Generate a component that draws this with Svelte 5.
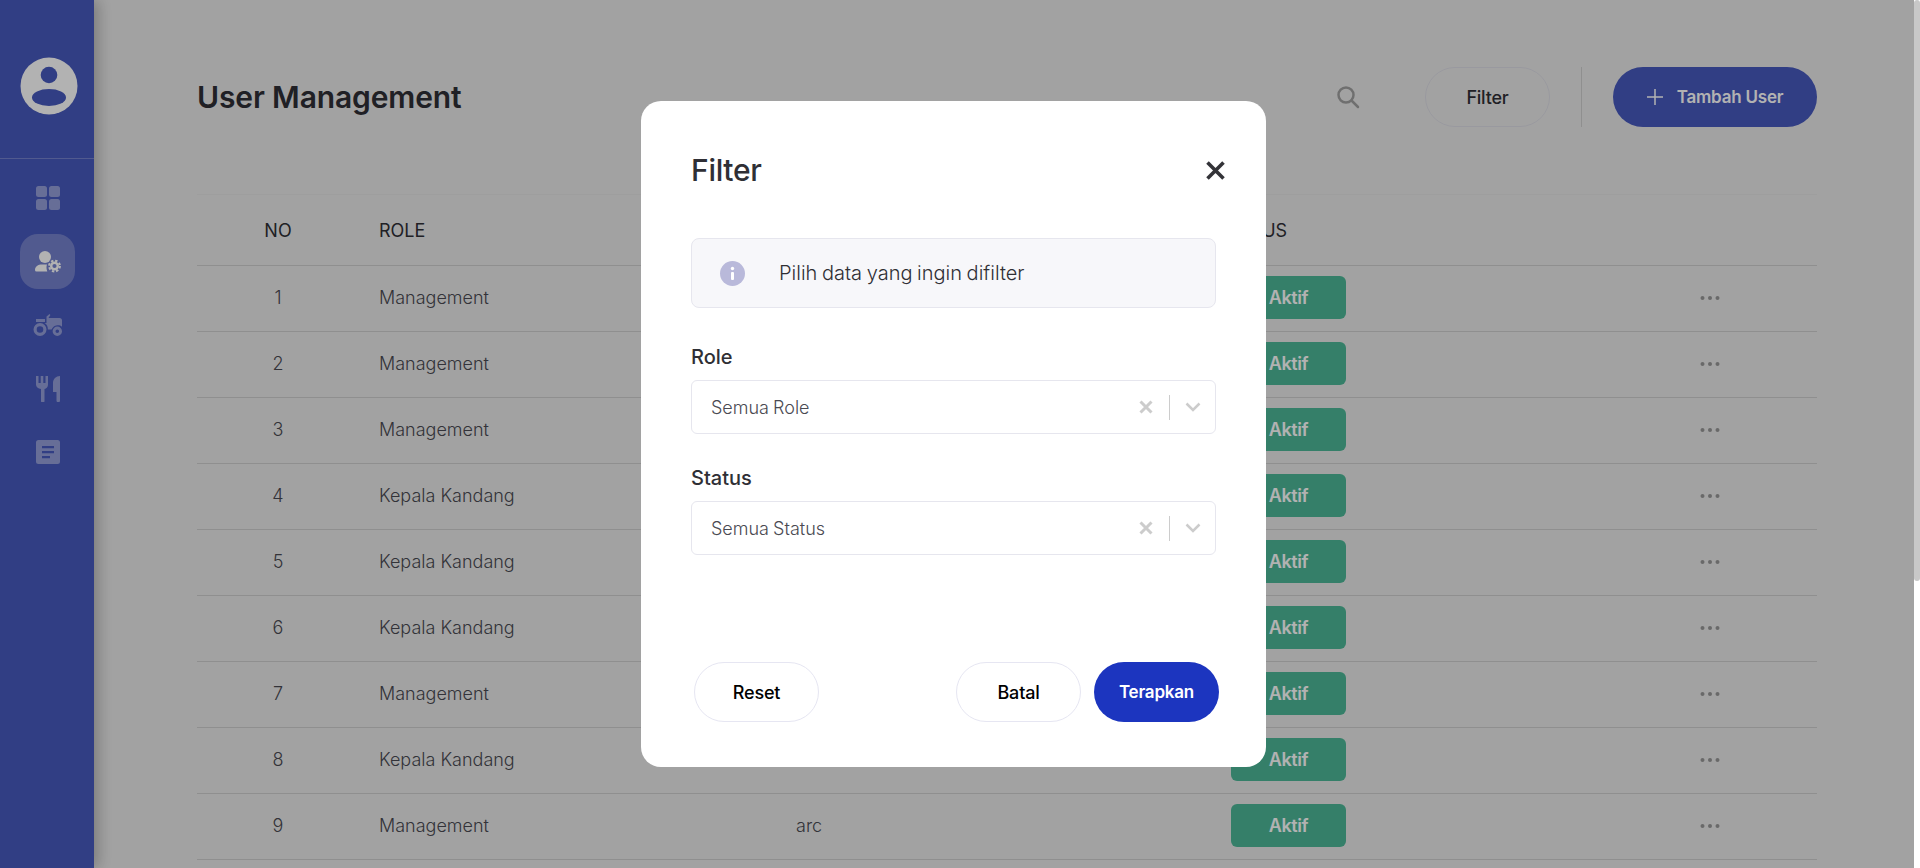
<script lang="ts">
	const roles = [
		"Management",
		"Management",
		"Management",
		"Kepala Kandang",
		"Kepala Kandang",
		"Kepala Kandang",
		"Management",
		"Kepala Kandang",
		"Management",
	];
	const rows = roles.map((role, i) => ({ no: i + 1, role, name: i === 8 ? "arc" : "" }));
</script>

<div class="page">
	<aside class="sidebar">
		<div class="sidebar__head">
			<svg class="avatar" viewBox="0 0 58 58" aria-hidden="true">
				<circle cx="29" cy="29" r="28.5" fill="#fff" />
				<circle cx="29" cy="18" r="8.300" fill="#4759bd" />
				<ellipse cx="29" cy="40.500" rx="17" ry="8.500" fill="#4759bd" />
			</svg>
		</div>
		<nav class="sidebar__nav">
			<span class="nav-item">
				<svg viewBox="0 0 24 24" width="24" height="24" aria-hidden="true">
					<rect x="0" y="0" width="11" height="11" rx="2.500" />
					<rect x="13" y="0" width="11" height="11" rx="2.500" />
					<rect x="0" y="13" width="11" height="11" rx="2.500" />
					<rect x="13" y="13" width="11" height="11" rx="2.500" />
				</svg>
			</span>
			<span class="nav-item nav-item--active">
				<svg viewBox="0 0 26 22" width="26" height="22" aria-hidden="true">
					<circle cx="10" cy="6" r="6" />
					<path d="M0 19c0-3.500 3-5.500 7-5.500h5c-.8 2-.6 4.500.3 7H1.500A1.500 1.500 0 0 1 0 19z" />
					<circle cx="19.500" cy="15" r="3.300" fill="none" stroke="#fff" stroke-width="2.400" />
					<circle cx="19.500" cy="15" r="5.400" fill="none" stroke="#fff" stroke-width="2" stroke-dasharray="2.400 1.840" />
				</svg>
			</span>
			<span class="nav-item">
				<svg viewBox="0 0 29 22" width="29" height="22" aria-hidden="true">
					<path d="M3 5h9v3H3z" />
					<path d="M13.500 2.500L16.500 0l.9 1-1.900 3h11A2.500 2.500 0 0 1 29 6.500v6.300a6.500 6.500 0 0 0-10.400 2.700h-3.700c0-3-1.200-5.500-3.400-6.500h2z" />
					<path fill-rule="evenodd" d="M7 9a6.500 6.500 0 1 1 0 13A6.500 6.500 0 0 1 7 9zm0 3.200a3.300 3.300 0 1 0 0 6.600 3.300 3.300 0 0 0 0-6.600zM24.300 12.600a4.700 4.700 0 1 1 0 9.400 4.700 4.700 0 0 1 0-9.400zm0 2.900a1.800 1.800 0 1 0 0 3.600 1.800 1.800 0 0 0 0-3.600z" />
				</svg>
			</span>
			<span class="nav-item">
				<svg viewBox="0 0 24 26" width="24" height="26" aria-hidden="true">
					<path d="M0 0h2.500v7h2.200V0h2.600v7h2.200V0H12v8.500c0 2.500-1.500 4-3.500 4.500v12a1.500 1.500 0 0 1-3.500 0V13C2 12.500 0 11 0 8.500z" />
					<path d="M24 0v24.500a1.500 1.500 0 0 1-3.500 0V16H17V7c0-4 3-7 7-7z" />
				</svg>
			</span>
			<span class="nav-item">
				<svg viewBox="0 0 24 24" width="24" height="24" aria-hidden="true">
					<path fill-rule="evenodd" d="M2.500 0h19A2.500 2.500 0 0 1 24 2.500v19a2.500 2.500 0 0 1-2.500 2.500h-19A2.500 2.500 0 0 1 0 21.500v-19A2.500 2.500 0 0 1 2.500 0zM6 6v2.200h12V6zm0 5v2.200h12V11zm0 5v2.200h8V16z" />
				</svg>
			</span>
		</nav>
	</aside>

	<main class="content">
		<header class="content__head">
			<h1>User Management</h1>
			<div class="actions">
				<svg class="search" viewBox="0 0 24 24" width="24" height="24" fill="none" stroke="#a0a0a0" stroke-width="2.500" stroke-linecap="round" aria-hidden="true">
					<circle cx="10" cy="10" r="7.500" />
					<path d="M15.500 15.500L22 22" />
				</svg>
				<button class="btn btn--ghost btn--filter" type="button">Filter</button>
				<span class="actions__sep"></span>
				<button class="btn btn--primary" type="button">
					<svg viewBox="0 0 16 16" width="16" height="16" fill="none" stroke="#fff" stroke-width="1.500" aria-hidden="true">
						<path d="M8 0v16M0 8h16" />
					</svg>
					Tambah User
				</button>
			</div>
		</header>

		<table class="table">
			<thead>
				<tr>
					<th class="col-no">NO</th>
					<th class="col-role">ROLE</th>
					<th class="col-name"></th>
					<th class="col-status">STATUS</th>
					<th class="col-more"></th>
				</tr>
			</thead>
			<tbody>
				{#each rows as row (row.no)}
					<tr>
						<td class="col-no">{row.no}</td>
						<td class="col-role">{row.role}</td>
						<td class="col-name">{row.name}</td>
						<td class="col-status"><span class="badge">Aktif</span></td>
						<td class="col-more">
							<svg viewBox="0 0 20 4" width="20" height="4" fill="#979797" aria-hidden="true">
								<circle cx="2.500" cy="2" r="2" />
								<circle cx="10" cy="2" r="2" />
								<circle cx="17.500" cy="2" r="2" />
							</svg>
						</td>
					</tr>
				{/each}
			</tbody>
		</table>
	</main>
	<div class="scrollbar"><span class="scrollbar__thumb"></span></div>
</div>

<div class="overlay">
	<div class="modal" role="dialog" aria-label="Filter">
		<div class="modal__head">
			<h2>Filter</h2>
			<svg viewBox="0 0 19 19" width="19" height="19" fill="none" stroke="#333338" stroke-width="3.600" aria-hidden="true">
				<path d="M1.500 1.500l16 16M17.500 1.500l-16 16" />
			</svg>
		</div>

		<div class="info">
			<svg viewBox="0 0 25 25" width="25" height="25" aria-hidden="true">
				<circle cx="12.500" cy="12.500" r="12.500" fill="#b9b9da" />
				<rect x="11" y="11" width="3" height="8" rx="1" fill="#fff" />
				<circle cx="12.500" cy="7.500" r="1.700" fill="#fff" />
			</svg>
			<span>Pilih data yang ingin difilter</span>
		</div>

		<div class="field">
			<span class="field__label">Role</span>
			<div class="select">
				<span class="select__value">Semua Role</span>
				<svg viewBox="0 0 14 14" width="14" height="14" fill="none" stroke="#cccccc" stroke-width="3" aria-hidden="true">
					<path d="M1.500 1.500l11 11M12.500 1.500l-11 11" />
				</svg>
				<span class="select__sep"></span>
				<svg viewBox="0 0 16 10" width="16" height="10" fill="none" stroke="#cccccc" stroke-width="2.500" aria-hidden="true">
					<path d="M1.500 1.500L8 8l6.500-6.500" />
				</svg>
			</div>
		</div>

		<div class="field">
			<span class="field__label">Status</span>
			<div class="select">
				<span class="select__value">Semua Status</span>
				<svg viewBox="0 0 14 14" width="14" height="14" fill="none" stroke="#cccccc" stroke-width="3" aria-hidden="true">
					<path d="M1.500 1.500l11 11M12.500 1.500l-11 11" />
				</svg>
				<span class="select__sep"></span>
				<svg viewBox="0 0 16 10" width="16" height="10" fill="none" stroke="#cccccc" stroke-width="2.500" aria-hidden="true">
					<path d="M1.500 1.500L8 8l6.500-6.500" />
				</svg>
			</div>
		</div>

		<div class="modal__foot">
			<button class="btn btn--ghost" type="button">Reset</button>
			<div class="modal__foot-right">
				<button class="btn btn--ghost" type="button">Batal</button>
				<button class="btn btn--apply" type="button">Terapkan</button>
			</div>
		</div>
	</div>
</div>

<style>
	:global(body) {
		margin: 0;
		overflow: hidden;
		font-family: Inter, "Liberation Sans", sans-serif;
		color: #2f2f35;
		background: #e9e9e9;
	}

	.page {
		display: flex;
		height: 868px;
		overflow: hidden;
	}

	.sidebar {
		flex: 0 0 94px;
		background: #4759bd;
		box-shadow: 4px 0 14px rgba(0, 0, 0, 0.25);
		z-index: 1;
	}

	.sidebar__head {
		height: 159px;
		box-sizing: border-box;
		padding: 57px 0 0 20px;
		border-bottom: 1px solid rgba(255, 255, 255, 0.25);
	}

	.avatar {
		display: block;
		width: 58px;
		height: 58px;
	}

	.sidebar__nav {
		display: flex;
		flex-direction: column;
		align-items: flex-start;
		gap: 8.5px;
		padding: 11.5px 0 0 20px;
	}

	.nav-item {
		display: flex;
		align-items: center;
		justify-content: center;
		width: 55px;
		height: 55px;
		border-radius: 18px;
		fill: rgba(255, 255, 255, 0.42);
	}

	.nav-item--active {
		background: rgba(255, 255, 255, 0.25);
		fill: #fff;
	}

	.content {
		flex: 1;
		min-width: 0;
		padding: 67px 97px 0 103px;
	}

	.scrollbar {
		position: relative;
		z-index: 11;
		flex: 0 0 6px;
		background: #fff;
	}

	.scrollbar__thumb {
		display: block;
		height: 581px;
		border-radius: 3px;
		background: #c8c8c8;
	}

	.content__head {
		display: flex;
		align-items: center;
		justify-content: space-between;
		height: 60px;
		margin-bottom: 67px;
	}

	h1 {
		margin: 0;
		font-size: 30px;
		font-weight: 600;
		letter-spacing: -0.13px;
		color: #2f2f35;
	}

	.actions {
		display: flex;
		align-items: center;
	}

	.search {
		margin-right: 65px;
	}

	.actions__sep {
		width: 1px;
		height: 60px;
		margin: 0 31px;
		background: #cdcdcd;
	}

	.btn {
		height: 60px;
		width: 125px;
		box-sizing: border-box;
		border-radius: 30px;
		font-family: inherit;
		font-size: 18px;
		font-weight: 500;
		letter-spacing: -0.2px;
		padding: 0;
	}

	.btn--ghost {
		background: #fff;
		border: 1px solid #e6e6f2;
		color: #000;
	}

	.btn--filter {
		background: transparent;
		border-color: #dcdce4;
		color: #2f2f35;
	}

	.btn--primary {
		display: flex;
		align-items: center;
		justify-content: center;
		gap: 14px;
		width: 204px;
		background: #4759bd;
		border: 0;
		color: #fff;
		font-size: 17px;
		font-weight: 600;
	}

	.btn--apply {
		background: #1c35bf;
		border: 0;
		color: #fff;
		font-size: 17px;
		font-weight: 600;
	}

	.table {
		width: 100%;
		border-collapse: collapse;
		table-layout: fixed;
		font-size: 18px;
		font-weight: 300;
	}

	.table th {
		height: 70px;
		padding: 0;
		text-align: left;
		font-weight: 400;
		font-size: 18px;
		border-top: 1px solid #e2e2e2;
		border-bottom: 1px solid #cdcdcd;
	}

	.table td {
		height: 63px;
		padding: 0 0 2px;
		border-bottom: 1px solid #cdcdcd;
	}

	.table .col-no {
		width: 162px;
		text-align: center;
	}

	.table .col-role {
		width: 417px;
		padding-left: 20px;
	}

	.table .col-name {
		width: 422px;
	}

	.table .col-status {
		width: 346px;
		padding-left: 13px;
	}

	.table .col-more {
		text-align: left;
	}

	.col-no,
	.col-role,
	.col-name {
		color: #4a4a52;
	}

	.table th.col-no,
	.table th.col-role {
		color: #2f2f35;
	}

	.table th.col-status {
		padding-left: 0;
	}

	.badge {
		display: flex;
		align-items: center;
		justify-content: center;
		width: 115px;
		height: 43px;
		border-radius: 6px;
		background: #4db797;
		color: #fff;
		font-size: 18px;
		font-weight: 600;
		letter-spacing: -0.4px;
	}

	.col-more svg {
		display: block;
		margin-left: 136px;
	}

	.overlay {
		position: fixed;
		inset: 0 6px 0 0;
		z-index: 10;
		display: flex;
		align-items: center;
		justify-content: center;
		padding-right: 7px;
		background: rgba(0, 0, 0, 0.3);
	}

	.modal {
		display: flex;
		flex-direction: column;
		width: 625px;
		height: 666px;
		box-sizing: border-box;
		padding: 50px 47px 45px 50px;
		border-radius: 20px;
		background: #fff;
	}

	.modal__head {
		display: flex;
		align-items: center;
		justify-content: space-between;
		height: 38px;
		margin-bottom: 49px;
		margin-right: -6px;
	}

	h2 {
		margin: 0;
		font-size: 30px;
		font-weight: 500;
		letter-spacing: -0.3px;
		color: #2f2f35;
	}

	.info {
		display: flex;
		align-items: center;
		gap: 34px;
		height: 70px;
		width: 525px;
		box-sizing: border-box;
		padding-left: 28px;
		margin-bottom: 35px;
		border: 1px solid #e6e6ee;
		border-radius: 8px;
		background: #f7f7fa;
		font-size: 20px;
		font-weight: 300;
		word-spacing: -1px;
	}

	.field {
		display: flex;
		flex-direction: column;
		width: 525px;
		margin-bottom: 30px;
	}

	.field__label {
		margin-bottom: 9px;
		font-size: 20px;
		line-height: 28px;
		font-weight: 500;
		color: #2f2f35;
	}

	.select {
		display: flex;
		align-items: center;
		height: 54px;
		box-sizing: border-box;
		padding: 0 14px 0 19px;
		border: 1px solid #e6e6ee;
		border-radius: 6px;
		font-size: 18px;
		font-weight: 300;
		color: #4a4a52;
	}

	.select__value {
		flex: 1;
		word-spacing: -1px;
	}

	.select__sep {
		width: 1px;
		height: 25px;
		margin: 0 15px 0 16px;
		background: #cccccc;
	}

	.modal__foot {
		display: flex;
		justify-content: space-between;
		margin-top: auto;
		padding-left: 3px;
		margin-right: -3px;
		width: 528px;
		box-sizing: border-box;
	}

	.modal__foot-right {
		display: flex;
		gap: 13px;
	}
</style>
